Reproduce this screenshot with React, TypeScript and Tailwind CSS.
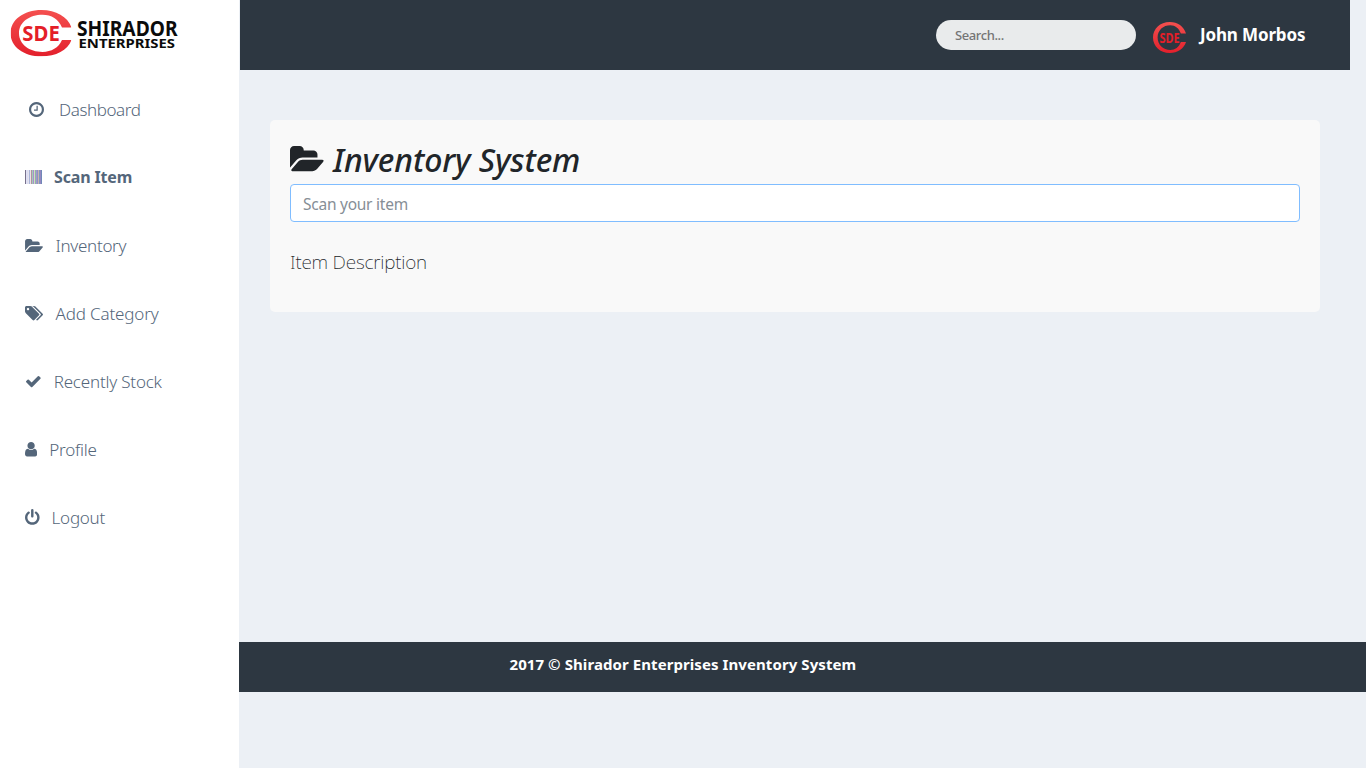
import React from "react";

const FOLDER =
  "M1943 952q0 31-31 66l-336 396q-43 51-120.500 86.500t-143.500 35.500h-1088q-34 0-60.500-13t-26.500-43q0-31 31-66l336-396q43-51 120.500-86.500t143.500-35.500h1088q34 0 60.500 13t26.500 43zm-343-344v160h-832q-94 0-197 47.500t-164 119.500l-337 396-5 6q0-4-.5-12.500t-.5-12.500v-960q0-92 66-158t158-66h320q92 0 158 66t66 158v32h544q92 0 158 66t66 158z";
const CLOCK =
  "M1024 544v448q0 14-9 23t-23 9h-320q-14 0-23-9t-9-23v-64q0-14 9-23t23-9h224v-352q0-14 9-23t23-9h64q14 0 23 9t9 23zm416 352q0-148-73-273t-198-198-273-73-273 73-198 198-73 273 73 273 198 198 273 73 273-73 198-198 73-273zm224 0q0 209-103 385.500t-279.500 279.500-385.500 103-385.500-103-279.500-279.500-103-385.500 103-385.500 279.500-279.500 385.500-103 385.500 103 279.500 279.500 103 385.500z";
const TAGS =
  "M448 448q0-53-37.500-90.500t-90.500-37.500-90.500 37.500-37.500 90.500 37.500 90.500 90.500 37.500 90.500-37.500 37.500-90.500zm1067 576q0 53-37 90l-491 492q-39 37-91 37-53 0-90-37l-715-716q-38-37-64.500-101t-26.500-117v-416q0-52 38-90t90-38h416q53 0 117 26.500t102 64.500l715 714q37 39 37 91zm384 0q0 53-37 90l-491 492q-39 37-91 37-36 0-59-14t-53-45l470-470q37-37 37-90 0-52-37-91l-715-714q-38-38-102-64.500t-117-26.500h224q53 0 117 26.500t102 64.500l715 714q37 39 37 91z";
const CHECK =
  "M1671 566q0 40-28 68l-724 724-136 136q-28 28-68 28t-68-28l-136-136-362-362q-28-28-28-68t28-68l136-136q28-28 68-28t68 28l294 295 656-657q28-28 68-28t68 28l136 136q28 28 28 68z";
const USER =
  "M1536 1399q0 109-62.500 187t-150.500 78h-854q-88 0-150.500-78t-62.500-187q0-85 8.500-160.500t31.500-152 58.500-131 94-89 134.500-34.500q131 128 313 128t313-128q76 0 134.500 34.500t94 89 58.500 131 31.500 152 8.500 160.500zm-256-887q0 159-112.500 271.500t-271.500 112.500-271.500-112.500-112.500-271.500 112.500-271.500 271.500-112.500 271.500 112.500 112.500 271.500z";
const POWER =
  "M1664 896q0 156-61 298t-164 245-245 164-298 61-298-61-245-164-164-245-61-298q0-182 80.500-343t226.500-270q43-32 95.500-25t83.500 50q32 42 24.500 94.500t-49.500 84.500q-98 74-151.500 181t-53.500 228q0 104 40.500 198.500t109.500 163.500 163.500 109.500 198.500 40.500 198.500-40.500 163.500-109.500 109.500-163.500 40.500-198.500q0-121-53.500-228t-151.500-181q-42-32-49.500-84.500t24.500-94.500q31-43 84-50t95 25q146 109 226.500 270t80.500 343zm-640-768v640q0 52-38 90t-90 38-90-38-38-90v-640q0-52 38-90t90-38 90 38 38 90z";

function Icon({ d, box, className }: { d: string; box: string; className: string }) {
  return (
    <svg viewBox={box} className={"shrink-0 " + className} fill="currentColor" aria-hidden="true">
      <path d={d} />
    </svg>
  );
}

const BARS = [
  "#77708c", "#dfe0f2", "#dcdcf0", "#e4e2ee", "#a9b4d8", "#ece3e0", "#b08fa8", "#9fd0b4", "#a78fd0",
  "#d4d9c4", "#8fb6a4", "#a695cf", "#8c95c0", "#c9b4ae", "#7f97c0", "#9588c0", "#7088b8",
];

function Barcode() {
  return (
    <svg viewBox="0 0 17 14" className="h-[14px] w-[17px] shrink-0" shapeRendering="crispEdges" aria-hidden="true">
      {BARS.map((color, x) => (
        <rect key={x} x={x} y="0" width="1" height="14" fill={color} />
      ))}
    </svg>
  );
}

function Emblem({ id, className }: { id: string; className: string }) {
  return (
    <svg viewBox="0 0 61 46" preserveAspectRatio="none" className={className} aria-hidden="true">
      <defs>
        <linearGradient id={id} x1="0" y1="0" x2="0" y2="1">
          <stop offset="0" stopColor="#f4504f" />
          <stop offset="1" stopColor="#e3202c" />
        </linearGradient>
      </defs>
      <path
        fill={"url(#" + id + ")"}
        d="M61 17.200C57 6.500 45.500 0 31 0 13 0 0 10 0 23s13 23 31 23c14.500 0 26-6 30-16.200h-9.500C48 37.500 41 41.500 32 41.500 19 41.500 8.500 34 8.500 23S19 4.800 32 4.800C41 4.800 48 9.300 51.500 17.200z"
      />
      <text
        x="11.800"
        y="31"
        textLength="37.500"
        lengthAdjust="spacingAndGlyphs"
        fontFamily="'Noto Sans', sans-serif"
        fontWeight="700"
        fontSize="21.500"
        fill="#e41e28"
      >
        SDE
      </text>
    </svg>
  );
}

const NAV = [
  { label: "Dashboard", icon: <Icon d={CLOCK} box="128 128 1536 1536" className="ml-[3.500px] h-[15px] w-[15px]" />, text: "ml-[15.500px] tracking-[-0.4px]" },
  { label: "Scan Item", icon: <Barcode />, text: "ml-[12px] text-[16px] font-bold tracking-[-0.150px]" },
  { label: "Inventory", icon: <Icon d={FOLDER} box="64 128 1879 1408" className="mt-px h-[13.400px] w-[18px]" />, text: "ml-[12.500px] tracking-[-0.3px]" },
  { label: "Add Category", icon: <Icon d={TAGS} box="0 128 1899 1515" className="mt-px h-[14.400px] w-[18px]" />, text: "ml-[12.500px] tracking-[-0.150px]" },
  { label: "Recently Stock", icon: <Icon d={CHECK} box="121 334 1550 1188" className="ml-px mt-[2px] h-[11.300px] w-[14.700px]" />, text: "ml-[13px] tracking-[-0.2px]" },
  { label: "Profile", icon: <Icon d={USER} box="256 128 1280 1536" className="mt-px h-[14.600px] w-[12.200px]" />, text: "ml-[12px] tracking-[-0.2px]" },
  { label: "Logout", icon: <Icon d={POWER} box="128 0 1536 1664" className="h-[15.800px] w-[14.600px]" />, text: "ml-[12px] tracking-[-0.250px]" },
];

function Sidebar() {
  return (
    <aside className="flex w-[239px] shrink-0 flex-col bg-white">
      <div className="h-[75px] pt-[10px] pl-[10px]">
        <svg viewBox="0 0 170 47" className="h-[47px] w-[170px] overflow-visible">
          <svg x="0.500" y="0" width="61" height="46.500">
            <Emblem id="brandRed" className="" />
          </svg>
          <g fontFamily="'Noto Sans', sans-serif" fontWeight="700" fill="#0b0b0b">
            <text x="67" y="25.800" fontSize="20.500" textLength="100.500" lengthAdjust="spacingAndGlyphs">SHIRADOR</text>
            <text x="68.500" y="38" fontSize="13" textLength="96.500" lengthAdjust="spacingAndGlyphs">ENTERPRISES</text>
          </g>
        </svg>
      </div>
      <nav className="flex flex-col text-[17px] leading-none font-[350] text-[#54667a]">
        {NAV.map((item) => (
          <a key={item.label} className="flex h-[68px] items-center pl-[25px]">
            {item.icon}
            <span className={"whitespace-nowrap " + item.text}>{item.label}</span>
          </a>
        ))}
      </nav>
    </aside>
  );
}

export default function App() {
  return (
    <div className="flex h-[768px] w-[1366px] overflow-hidden bg-[#ecf0f5] font-['Noto_Sans',sans-serif]">
      <Sidebar />
      <div className="flex flex-1 flex-col">
        <header className="mr-4 ml-px flex h-[70px] items-center bg-[#2d3741] pl-[696px]">
          <input
            placeholder="Search..."
            className="h-[30px] w-[200px] shrink-0 rounded-full bg-[#e9ebec] pl-[19px] text-[13px] font-medium tracking-[-0.4px] outline-none placeholder:text-[#757575]"
          />
          <Emblem id="avatarRed" className="mt-[5px] ml-[17px] h-[31px] w-[33px] shrink-0" />
          <span className="ml-[14px] text-[17px] font-bold tracking-[-0.150px] whitespace-nowrap text-white">John Morbos</span>
        </header>
        <main className="h-[572px] pt-[50px] pr-[46px] pl-[31px]">
          <section className="h-[192px] rounded-[5px] bg-[#f9f9f9] px-5 pt-5">
            <h2 className="flex h-11 items-center text-[32px] leading-none font-medium text-[#212529] italic">
              <Icon d={FOLDER} box="64 128 1879 1408" className="mb-[6px] h-[25.200px] w-[33.600px]" />
              <span className="ml-[9.500px] pb-[5px] tracking-[-0.1px] whitespace-nowrap">Inventory System</span>
            </h2>
            <input
              placeholder="Scan your item"
              className="block h-[38px] w-full rounded-[4px] border border-[#80bdff] bg-white px-3 pt-[2px] text-[15.500px] tracking-[-0.25px] outline-none placeholder:text-[#868e96]"
            />
            <p className="mt-[26px] text-[19px] leading-[28px] font-extralight tracking-[-0.2px] text-[#212529]">Item Description</p>
          </section>
        </main>
        <footer className="flex h-[50px] bg-[#2d3741] pt-[10px] pl-[270.500px]">
          <span className="text-[15px] leading-6 font-bold tracking-[0.080px] whitespace-nowrap text-white">2017 © Shirador Enterprises Inventory System</span>
        </footer>
      </div>
    </div>
  );
}
